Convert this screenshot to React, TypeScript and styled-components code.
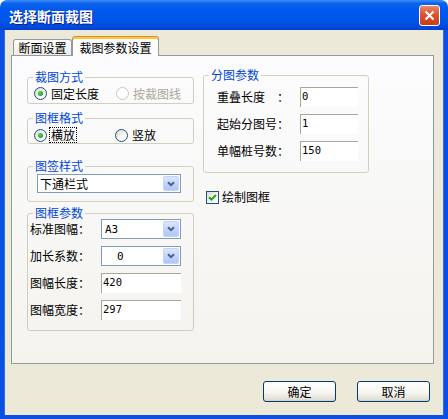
import styled, { createGlobalStyle } from "styled-components";

const GlobalStyle = createGlobalStyle`
  html, body {
    margin: 0;
    padding: 0;
    background: #ffffff;
  }
  body {
    font-family: "Noto Sans CJK SC", "Noto Sans", sans-serif;
    font-size: 12px;
    color: #000;
  }
`;

const Window = styled.div`
  width: 448px;
  height: 419px;
  display: flex;
  flex-direction: column;
`;

const TitleBar = styled.div`
  height: 30px;
  flex: none;
  box-sizing: border-box;
  border-radius: 7px 7px 0 0;
  background: linear-gradient(
    to bottom,
    #3b8cf8 0%,
    #0a62ec 12%,
    #0058ee 35%,
    #0055e6 70%,
    #0049dc 90%,
    #003fd2 100%
  );
  display: flex;
  align-items: center;
  justify-content: space-between;
  padding: 1px 8px 0 9px;
`;

const Title = styled.span`
  color: #fff;
  font-weight: bold;
  font-size: 14px;
  line-height: 16px;
  text-shadow: 1px 1px 0 #0a1e8c;
`;

const CloseButton = styled.div`
  width: 21px;
  height: 21px;
  box-sizing: border-box;
  border: 1px solid #fff;
  border-radius: 3px;
  background: linear-gradient(to bottom, #e9876a 0%, #dc5330 45%, #c73d16 100%);
  display: flex;
  align-items: center;
  justify-content: center;
`;

const Client = styled.div`
  flex: 1;
  box-sizing: border-box;
  background: #ece9d8;
  border: 4px solid #0b4fe4;
  border-top: 0;
  box-shadow: inset 1px 0 0 #2a6ef0, inset -1px 0 0 #2a6ef0;
  padding: 6px 0 0 7px;
  display: flex;
  flex-direction: column;
`;

const TabRow = styled.div`
  display: flex;
  align-items: flex-end;
  height: 19px;
  padding-left: 2px;
  position: relative;
  z-index: 1;
`;

const Tab = styled.div<{ $active?: boolean; $w: number }>`
  width: ${(p) => p.$w}px;
  height: ${(p) => (p.$active ? 20 : 16)}px;
  margin-bottom: ${(p) => (p.$active ? -1 : 0)}px;
  box-sizing: border-box;
  border: 1px solid #919b9c;
  border-bottom: none;
  border-top-color: ${(p) => (p.$active ? "#e68b2c" : "#919b9c")};
  border-radius: 3px 3px 0 0;
  background: ${(p) =>
    p.$active ? "#fcfcfe" : "linear-gradient(to bottom, #ffffff, #ecebe6)"};
  box-shadow: ${(p) => (p.$active ? "inset 0 2px 0 #ffc73c" : "none")};
  display: flex;
  align-items: center;
  justify-content: center;
  padding-top: ${(p) => (p.$active ? 2 : 0)}px;
  line-height: 14px;
`;

const Panel = styled.div`
  width: 423px;
  height: 309px;
  box-sizing: border-box;
  border: 1px solid #919b9c;
  background: linear-gradient(to bottom, #fcfcfe, #f4f3ee);
  display: flex;
  gap: 9px;
  padding: 12px 0 0 15px;
`;

const Column = styled.div<{ $w: number; $top?: number }>`
  width: ${(p) => p.$w}px;
  margin-top: ${(p) => p.$top ?? 0}px;
  display: flex;
  flex-direction: column;
`;

const Group = styled.fieldset<{ $top?: number; $pb?: number }>`
  margin: ${(p) => p.$top ?? 0}px 0 0 0;
  padding: 0 0 ${(p) => p.$pb ?? 0}px 0;
  border: 1px solid #d0d0bf;
  border-radius: 3px;
  min-width: 0;
`;

const Legend = styled.legend`
  color: #0046d5;
  padding: 0 2px;
  margin-left: 5px;
  line-height: 14px;
  font-size: 12px;
`;

const RadioRow = styled.div<{ $h: number; $mt?: number }>`
  display: flex;
  align-items: center;
  height: ${(p) => p.$h}px;
  margin-top: ${(p) => p.$mt ?? 0}px;
  padding-left: 6px;
`;

const RadioItem = styled.div<{ $w?: number; $disabled?: boolean }>`
  width: ${(p) => (p.$w ? `${p.$w}px` : "auto")};
  display: flex;
  align-items: center;
  gap: 3px;
  color: ${(p) => (p.$disabled ? "#aca899" : "#000")};
  line-height: 14px;
`;

const RadioCircle = styled.span<{ $checked?: boolean; $disabled?: boolean }>`
  width: 13px;
  height: 13px;
  box-sizing: border-box;
  border-radius: 50%;
  border: 1px solid ${(p) => (p.$disabled ? "#cac8bb" : "#1c5180")};
  background: ${(p) =>
    p.$disabled ? "#ffffff" : "linear-gradient(135deg, #dcd9cf 0%, #f6f6f3 55%, #ffffff 100%)"};
  display: flex;
  align-items: center;
  justify-content: center;
  flex: none;

  &::after {
    content: "";
    display: ${(p) => (p.$checked ? "block" : "none")};
    width: 5px;
    height: 5px;
    border-radius: 50%;
    background: radial-gradient(circle at 40% 40%, #5fd35f, #21a121 70%);
  }
`;

const FocusText = styled.span<{ $focus?: boolean }>`
  padding: 0 1px;
  outline: ${(p) => (p.$focus ? "1px dotted #000" : "none")};
  outline-offset: 0;
`;

const Select = styled.div<{ $w: number; $h: number; $ml?: number; $mt?: number }>`
  width: ${(p) => p.$w}px;
  height: ${(p) => p.$h}px;
  margin-left: ${(p) => p.$ml ?? 0}px;
  margin-top: ${(p) => p.$mt ?? 0}px;
  box-sizing: border-box;
  border: 1px solid #7f9db9;
  background: #fff;
  display: flex;
  align-items: stretch;
`;

const SelectText = styled.div<{ $mono?: boolean; $pl: number }>`
  flex: 1;
  display: flex;
  align-items: center;
  padding-left: ${(p) => p.$pl}px;
  font-family: ${(p) =>
    p.$mono ? '"DejaVu Sans Mono", "Liberation Mono", monospace' : "inherit"};
  font-size: ${(p) => (p.$mono ? 11 : 12)}px;
`;

const DropButton = styled.div`
  width: 16px;
  margin: 1px 1px 1px 0;
  box-sizing: border-box;
  border: 1px solid #c3d3fd;
  border-radius: 2px;
  background: linear-gradient(to bottom, #dbe5fe 0%, #c3d4fc 50%, #b1c6f6 100%);
  display: flex;
  align-items: center;
  justify-content: center;
`;

const FormGrid = styled.div<{ $cols: string; $mt?: number; $ml?: number }>`
  display: grid;
  grid-template-columns: ${(p) => p.$cols};
  grid-auto-rows: 20px;
  row-gap: 7px;
  align-items: center;
  margin-top: ${(p) => p.$mt ?? 0}px;
  margin-left: ${(p) => p.$ml ?? 0}px;
`;

const FieldLabel = styled.span`
  white-space: pre;
  line-height: 14px;
`;

const Edit = styled.div<{ $w: number }>`
  width: ${(p) => p.$w}px;
  height: 20px;
  box-sizing: border-box;
  border-top: 1px solid #a7a69a;
  border-left: 1px solid #a7a69a;
  background: #fff;
  padding: 2px 0 0 1px;
  font-family: "DejaVu Sans Mono", "Liberation Mono", monospace;
  font-size: 10.5px;
  line-height: 12px;
`;

const CheckRow = styled.div`
  display: flex;
  align-items: center;
  gap: 3px;
  margin: 17px 0 0 3px;
  line-height: 14px;
`;

const CheckBox = styled.span`
  width: 13px;
  height: 13px;
  box-sizing: border-box;
  border: 1px solid #1c5180;
  background: linear-gradient(135deg, #dcd9cf 0%, #f6f6f3 55%, #ffffff 100%);
  display: flex;
  align-items: center;
  justify-content: center;
`;

const Footer = styled.div`
  width: 423px;
  box-sizing: border-box;
  display: flex;
  justify-content: flex-end;
  gap: 21px;
  padding-right: 4px;
  margin-top: 17px;
`;

const Button = styled.div`
  width: 73px;
  height: 21px;
  box-sizing: border-box;
  border: 1px solid #003c74;
  border-radius: 3px;
  background: linear-gradient(to bottom, #ffffff 0%, #f5f5f1 55%, #e3e0d6 90%, #d6d0c5 100%);
  display: flex;
  align-items: center;
  justify-content: center;
  line-height: 14px;
`;

function Chevron() {
  return (
    <svg width="8" height="6" viewBox="0 0 8 6">
      <path d="M1 1.2 L4 4.2 L7 1.2" fill="none" stroke="#4d6185" strokeWidth="2" />
    </svg>
  );
}

function Dropdown(props: {
  w: number;
  h: number;
  text: string;
  pl: number;
  mono?: boolean;
  ml?: number;
  mt?: number;
}) {
  return (
    <Select $w={props.w} $h={props.h} $ml={props.ml} $mt={props.mt}>
      <SelectText $mono={props.mono} $pl={props.pl}>
        {props.text}
      </SelectText>
      <DropButton>
        <Chevron />
      </DropButton>
    </Select>
  );
}

export default function App() {
  return (
    <>
      <GlobalStyle />
      <Window>
        <TitleBar>
          <Title>选择断面裁图</Title>
          <CloseButton>
            <svg width="11" height="11" viewBox="0 0 11 11">
              <path d="M1.5 1.5 L9.5 9.5 M9.5 1.5 L1.5 9.5" stroke="#fff" strokeWidth="2" />
            </svg>
          </CloseButton>
        </TitleBar>
        <Client>
          <TabRow>
            <Tab $w={59}>断面设置</Tab>
            <Tab $w={87} $active>
              裁图参数设置
            </Tab>
          </TabRow>
          <Panel>
            <Column $w={167} $top={2}>
              <Group>
                <Legend>裁图方式</Legend>
                <RadioRow $h={19}>
                  <RadioItem $w={82}>
                    <RadioCircle $checked />
                    <FocusText>固定长度</FocusText>
                  </RadioItem>
                  <RadioItem $disabled>
                    <RadioCircle $disabled />
                    <FocusText>按裁图线</FocusText>
                  </RadioItem>
                </RadioRow>
              </Group>
              <Group $top={7}>
                <Legend>图框格式</Legend>
                <RadioRow $h={16} $mt={2}>
                  <RadioItem $w={81}>
                    <RadioCircle $checked />
                    <FocusText $focus>横放</FocusText>
                  </RadioItem>
                  <RadioItem>
                    <RadioCircle />
                    <FocusText>竖放</FocusText>
                  </RadioItem>
                </RadioRow>
              </Group>
              <Group $top={15} $pb={8}>
                <Legend>图签样式</Legend>
                <Dropdown w={144} h={19} ml={9} mt={1} pl={2} text="下通栏式" />
              </Group>
              <Group $top={4} $pb={10}>
                <Legend>图框参数</Legend>
                <FormGrid $cols="71px 80px" $mt={-1} $ml={2}>
                  <FieldLabel>标准图幅：</FieldLabel>
                  <Dropdown w={80} h={20} pl={3} mono text="A3" />
                  <FieldLabel>加长系数：</FieldLabel>
                  <Dropdown w={80} h={20} pl={15} mono text="0" />
                  <FieldLabel>图幅长度：</FieldLabel>
                  <Edit $w={80}>420</Edit>
                  <FieldLabel>图幅宽度：</FieldLabel>
                  <Edit $w={80}>297</Edit>
                </FormGrid>
              </Group>
            </Column>
            <Column $w={166}>
              <Group $pb={11}>
                <Legend>分图参数</Legend>
                <FormGrid $cols="83px 58px" $mt={5} $ml={13}>
                  <FieldLabel>重叠长度　：</FieldLabel>
                  <Edit $w={58}>0</Edit>
                  <FieldLabel>起始分图号：</FieldLabel>
                  <Edit $w={58}>1</Edit>
                  <FieldLabel>单幅桩号数：</FieldLabel>
                  <Edit $w={58}>150</Edit>
                </FormGrid>
              </Group>
              <CheckRow>
                <CheckBox>
                  <svg width="9" height="9" viewBox="0 0 9 9">
                    <path d="M1 4.2 L3.4 6.6 L8 2" fill="none" stroke="#21a121" strokeWidth="2" />
                  </svg>
                </CheckBox>
                <span>绘制图框</span>
              </CheckRow>
            </Column>
          </Panel>
          <Footer>
            <Button>确定</Button>
            <Button>取消</Button>
          </Footer>
        </Client>
      </Window>
    </>
  );
}
